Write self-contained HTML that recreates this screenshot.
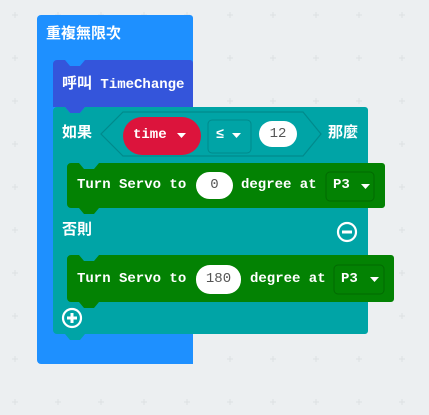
<!DOCTYPE html>
<html><head><meta charset="utf-8"><style>
body{margin:0;width:429px;height:415px;overflow:hidden;background:#eceff1;position:relative;font-family:"Liberation Mono","Noto Sans CJK TC",monospace;}
.a{position:absolute;}
.t{position:absolute;color:#fff;font-weight:bold;font-size:14px;white-space:nowrap;line-height:16px}
.cjk{font-family:"Liberation Sans","Noto Sans CJK TC",sans-serif;font-size:15px}
.pill{position:absolute;background:#fff;border-radius:14px;color:#555;font-size:14px;text-align:center;line-height:26px}
</style></head><body>
<svg class="a" style="left:0;top:0" width="429" height="415">
<g stroke="#dde1e3" stroke-width="1" id="g"></g>
<!-- blue forever -->
<path d="M41 15H190a3 3 0 0 1 3 3V364H41a4 4 0 0 1-4-4V19a4 4 0 0 1 4-4z" fill="#1e90ff"/>
<path d="M57 60h8l5 6h10l5-6h105a3 3 0 0 1 3 3V107H85l-5 6H70l-5-6H53V64a4 4 0 0 1 4-4z" fill="#3455db"/>
<path d="M57 107h8l5 6h10l5-6h280a3 3 0 0 1 3 3V331a3 3 0 0 1-3 3H85l-5 6H70l-5-6H57a4 4 0 0 1-4-4V111a4 4 0 0 1 4-4z" fill="#00a4a6"/>
<path d="M123 112H303L321 134L303 156H123L101 134Z" fill="#00a4a6" stroke="#008a8c" stroke-width="1.2"/>
<path d="M71 163h8l5 6h10l5-6h283a3 3 0 0 1 3 3V205a3 3 0 0 1-3 3H99l-5 6H84l-5-6H71a4 4 0 0 1-4-4V167a4 4 0 0 1 4-4z" fill="#038203"/>
<path d="M71 255h8l5 6h10l5-6h292a3 3 0 0 1 3 3V299a3 3 0 0 1-3 3H99l-5 6H84l-5-6H71a4 4 0 0 1-4-4V259a4 4 0 0 1 4-4z" fill="#038203"/>
<rect x="123" y="117" width="78" height="38" rx="19" fill="#dc143c"/>
<path d="M177 133h9l-4.5 5z" fill="#fff"/>
<rect x="208" y="120" width="43" height="33" rx="4" fill="none" stroke="#008a8c"/>
<path d="M232 133h9l-4.5 5z" fill="#fff"/>
<circle cx="347" cy="232" r="9" fill="none" stroke="#fff" stroke-width="2.2"/>
<path d="M342 232h10" stroke="#fff" stroke-width="3"/>
<circle cx="72" cy="318" r="9" fill="none" stroke="#fff" stroke-width="2.2"/>
<path d="M67 318h10M72 313v10" stroke="#fff" stroke-width="3"/>
<rect x="326" y="172" width="48" height="29" rx="4" fill="none" stroke="#026a02"/>
<path d="M361 184h9l-4.5 5z" fill="#fff"/>
<rect x="334" y="265" width="50" height="29" rx="4" fill="none" stroke="#026a02"/>
<path d="M370 277h9l-4.5 5z" fill="#fff"/>
</svg>
<script>
var g=document.getElementById('g'),d='';
for(var x=15;x<429;x+=43)for(var y=15;y<415;y+=43){d+='M'+(x-3)+' '+y+'h6M'+x+' '+(y-3)+'v6';}
var p=document.createElementNS('http://www.w3.org/2000/svg','path');p.setAttribute('d',d);g.appendChild(p);
</script>
<div class="t cjk" style="left:46px;top:26px">重複無限次</div>
<div class="t" style="left:62px;top:76px"><span class="cjk">呼叫</span> TimeChange</div>
<div class="t cjk" style="left:62px;top:125px">如果</div>
<div class="t" style="left:133px;top:127px">time</div>
<div class="t" style="left:216px;top:127px">≤</div>
<div class="pill" style="left:259px;top:121px;width:38px;height:26px">12</div>
<div class="t cjk" style="left:328px;top:125px">那麼</div>
<div class="t" style="left:77px;top:177px">Turn Servo to</div>
<div class="pill" style="left:196px;top:172px;width:37px;height:27px">0</div>
<div class="t" style="left:241px;top:177px">degree at</div>
<div class="t" style="left:333px;top:177px">P3</div>
<div class="t cjk" style="left:62px;top:222px">否則</div>
<div class="t" style="left:77px;top:271px">Turn Servo to</div>
<div class="pill" style="left:196px;top:265px;width:45px;height:29px;line-height:29px">180</div>
<div class="t" style="left:250px;top:271px">degree at</div>
<div class="t" style="left:341px;top:271px">P3</div>
</body></html>
